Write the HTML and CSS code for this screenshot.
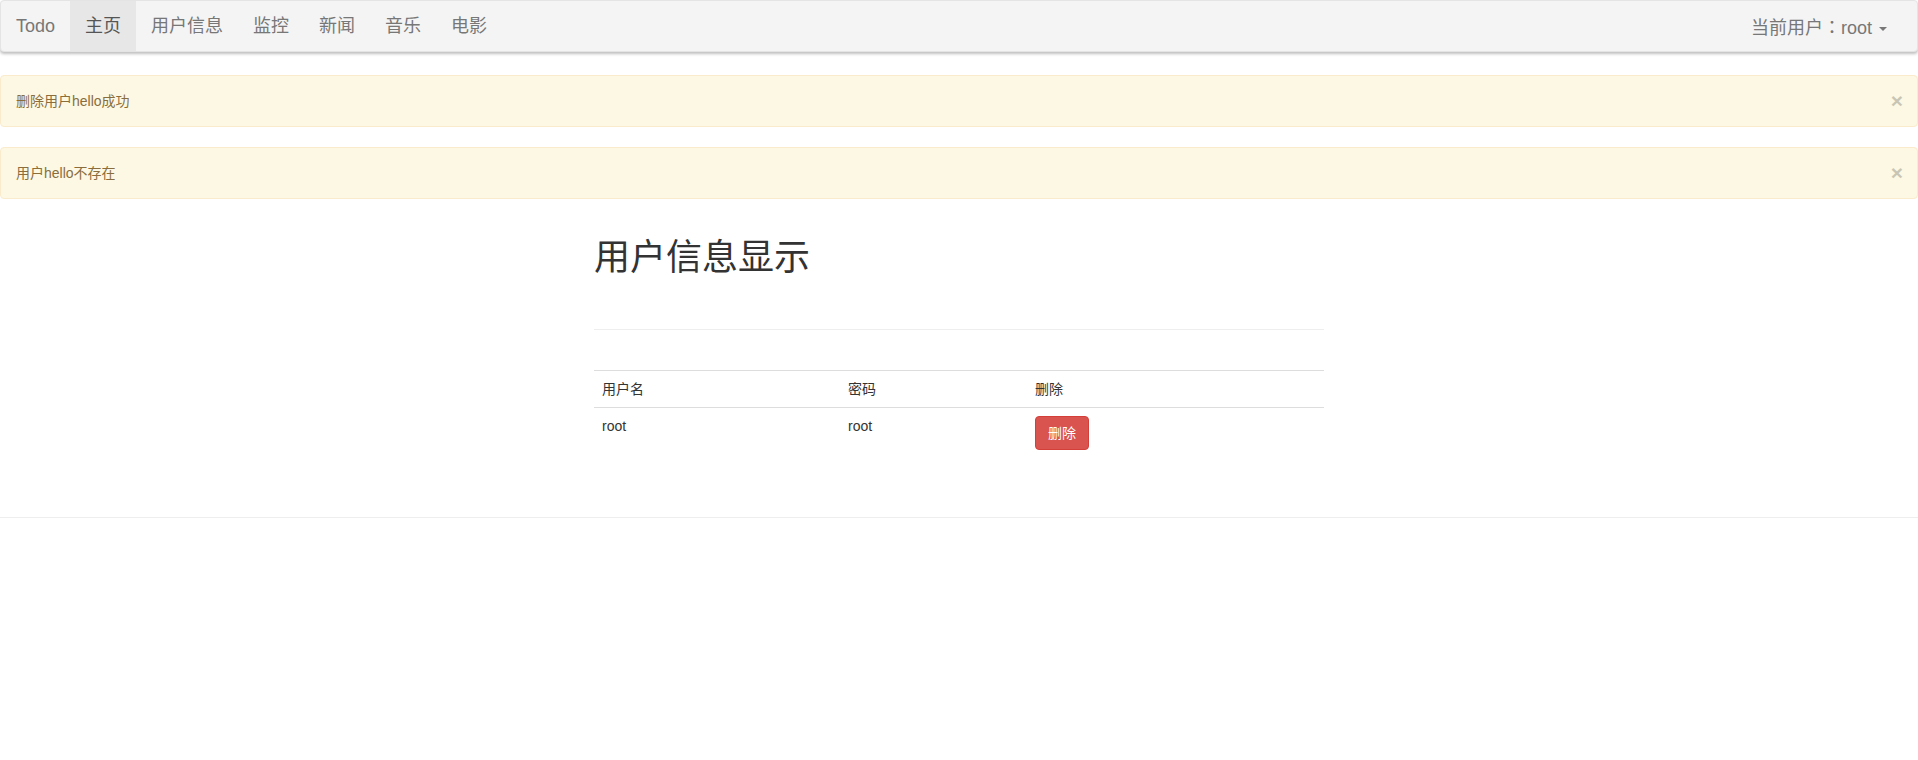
FILE: index.html
```html
<!DOCTYPE html>
<html lang="zh-CN">
<head>
<meta charset="utf-8">
<title>用户信息显示</title>
<link rel="stylesheet" href="styles.css">
</head>
<body>
<nav class="navbar">
  <div class="nav-left">
    <a class="brand">Todo</a>
    <a class="nav-item active">主页</a>
    <a class="nav-item">用户信息</a>
    <a class="nav-item">监控</a>
    <a class="nav-item">新闻</a>
    <a class="nav-item">音乐</a>
    <a class="nav-item">电影</a>
  </div>
  <div class="nav-right">
    <a class="nav-item">当前用户<span class="colon">：</span>root <span class="caret"></span></a>
  </div>
</nav>

<div class="alerts">
  <div class="alert"><span>删除用户hello成功</span><span class="close">×</span></div>
  <div class="alert"><span>用户hello不存在</span><span class="close">×</span></div>
</div>

<main class="main">
  <h1 class="title">用户信息显示</h1>
  <hr class="divider">
  <table class="table">
    <thead>
      <tr><th class="c1">用户名</th><th class="c2">密码</th><th class="c3">删除</th></tr>
    </thead>
    <tbody>
      <tr><td>root</td><td>root</td><td><button class="btn-danger">删除</button></td></tr>
    </tbody>
  </table>
</main>
<footer class="footer"></footer>
</body>
</html>
```

FILE: styles.css
```css
* { box-sizing: border-box; }
html, body { margin: 0; padding: 0; background: #fff; }
body {
  font-family: "Liberation Sans", "Noto Sans CJK SC", Arial, sans-serif;
  font-size: 14px;
  line-height: 20px;
  color: #333;
  text-spacing-trim: space-all;
}

.navbar {
  display: flex;
  justify-content: space-between;
  height: 52px;
  background: #f4f4f4;
  border: 1px solid #e4e4e4;
  border-radius: 4px;
  box-shadow: 0 2px 3px rgba(0, 0, 0, 0.25);
  margin-bottom: 23px;
}
.nav-left, .nav-right { display: flex; }
.nav-right { margin-right: 15px; }
.brand, .nav-item {
  display: block;
  height: 50px;
  padding: 15px;
  font-size: 18px;
  line-height: 20px;
  color: #777;
  text-decoration: none;
  white-space: nowrap;
}
.nav-item.active { background: #e7e7e7; color: #555; }
.colon {
  display: inline-block;
  width: 18px;
  font-family: "Noto Sans CJK JP", "Noto Sans CJK SC", sans-serif;
}
.caret {
  display: inline-block;
  width: 0;
  height: 0;
  margin-left: 2px;
  vertical-align: middle;
  border-top: 4px solid #777;
  border-left: 4px solid transparent;
  border-right: 4px solid transparent;
}

.alerts { display: flex; flex-direction: column; gap: 20px; }
.alert {
  display: flex;
  justify-content: space-between;
  align-items: center;
  height: 52px;
  padding: 15px 14px 15px 15px;
  background: #fcf8e3;
  border: 1px solid #faebcc;
  border-radius: 4px;
  color: #8a6d3b;
  font-size: 14px;
  line-height: 20px;
}
.close {
  font-size: 21px;
  font-weight: bold;
  line-height: 20px;
  height: 20px;
  color: #000;
  opacity: 0.2;
}

.main { width: 730px; margin: 0 auto; padding-top: 39px; }
.title {
  margin: 0;
  font-size: 36px;
  line-height: 40px;
  font-weight: 400;
  color: #333;
}
.divider {
  margin: 51px 0 0;
  border: 0;
  border-top: 1px solid #eee;
}
.table {
  width: 100%;
  margin: 40px 0 0;
  border-collapse: collapse;
}
.table th, .table td {
  padding: 8px;
  text-align: left;
  font-weight: normal;
  vertical-align: top;
  line-height: 20px;
}
.table th { border-top: 1px solid #ddd; border-bottom: 1px solid #ddd; }
.c1 { width: 246px; }
.c2 { width: 187px; }
.c3 { width: 297px; }

.btn-danger {
  display: inline-block;
  padding: 6px 12px;
  font-family: inherit;
  font-size: 14px;
  line-height: 20px;
  color: #fff;
  background: #d9534f;
  border: 1px solid #d43f3a;
  border-radius: 4px;
}

.footer {
  margin-top: 59px;
  border-top: 1px solid #eee;
}
```
